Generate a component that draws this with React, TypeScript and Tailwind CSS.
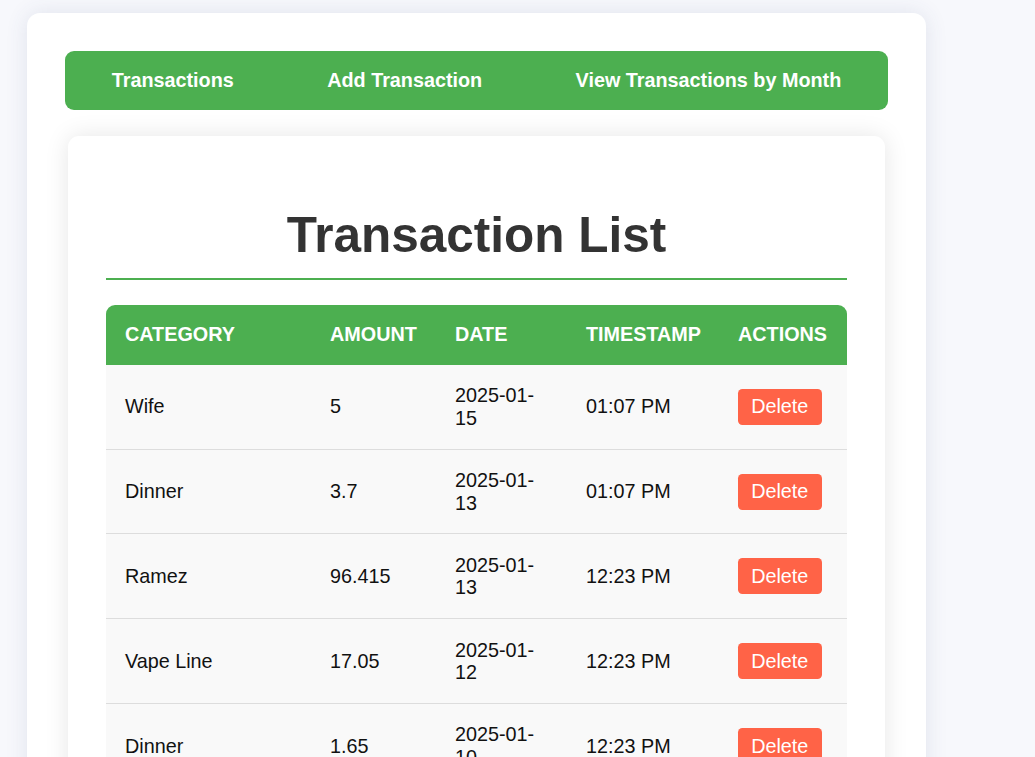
const transactions = [
  { category: 'Wife', amount: '5', date: '2025-01-15', time: '01:07 PM' },
  { category: 'Dinner', amount: '3.7', date: '2025-01-13', time: '01:07 PM' },
  { category: 'Ramez', amount: '96.415', date: '2025-01-13', time: '12:23 PM' },
  { category: 'Vape Line', amount: '17.05', date: '2025-01-12', time: '12:23 PM' },
  { category: 'Dinner', amount: '1.65', date: '2025-01-10', time: '12:23 PM' },
  { category: 'Lunch', amount: '4.2', date: '2025-01-09', time: '12:23 PM' },
];

const navLinks = ['Transactions', 'Add Transaction', 'View Transactions by Month'];

export default function App() {
  return (
    <div className="min-h-screen bg-[#f7f8fc] pt-[13px] pl-[27px] font-['Liberation_Sans',Arial,sans-serif] text-[19.8px] leading-[1.149]">
      <div className="w-[899px] rounded-[13px] bg-white p-[38px] shadow-[0_0_22px_rgba(60,70,120,0.12)]">
        {/* Top nav */}
        <nav className="flex h-[59px] items-center justify-around rounded-[9px] bg-[#4caf50]">
          {navLinks.map((link) => (
            <a key={link} className="font-bold text-white">
              {link}
            </a>
          ))}
        </nav>

        {/* List card */}
        <div className="mx-[3px] mt-[26px] rounded-[11px] bg-white px-[38px] pt-[38px] pb-[38px] shadow-[0_0_25px_rgba(0,0,0,0.1)]">
          <h2 className="mt-[33px] border-b-2 border-[#4caf50] pb-[14px] text-center text-[49.5px] leading-[1.149] font-bold text-[#333]">
            Transaction List
          </h2>

          <table className="mt-[25px] w-[741px] table-fixed border-collapse overflow-hidden rounded-t-[9px]">
            <colgroup>
              <col className="w-[205px]" />
              <col className="w-[125px]" />
              <col className="w-[131px]" />
              <col className="w-[152px]" />
              <col className="w-[128px]" />
            </colgroup>
            <thead>
              <tr className="bg-[#4caf50] text-left text-white">
                <th className="px-[19px] py-[18.6px] font-bold uppercase">Category</th>
                <th className="px-[19px] py-[18.6px] font-bold uppercase">Amount</th>
                <th className="px-[19px] py-[18.6px] font-bold uppercase">Date</th>
                <th className="px-[19px] py-[18.6px] font-bold uppercase">Timestamp</th>
                <th className="px-[19px] py-[18.6px] font-bold uppercase">Actions</th>
              </tr>
            </thead>
            <tbody>
              {transactions.map((t, i) => (
                <tr key={i} className="border-b border-[#ddd] bg-[#f9f9f9] text-[#111]">
                  <td className="px-[19px] py-[19.2px] align-middle">{t.category}</td>
                  <td className="px-[19px] py-[19.2px] align-middle">{t.amount}</td>
                  <td className="px-[19px] py-[19.2px] align-middle">{t.date}</td>
                  <td className="px-[19px] py-[19.2px] align-middle">{t.time}</td>
                  <td className="px-[19px] py-[19.2px] align-middle">
                    <button className="rounded-[4.4px] bg-[#ff6347] px-[13.2px] py-[6.6px] text-white">
                      Delete
                    </button>
                  </td>
                </tr>
              ))}
            </tbody>
          </table>
        </div>
      </div>
    </div>
  );
}
